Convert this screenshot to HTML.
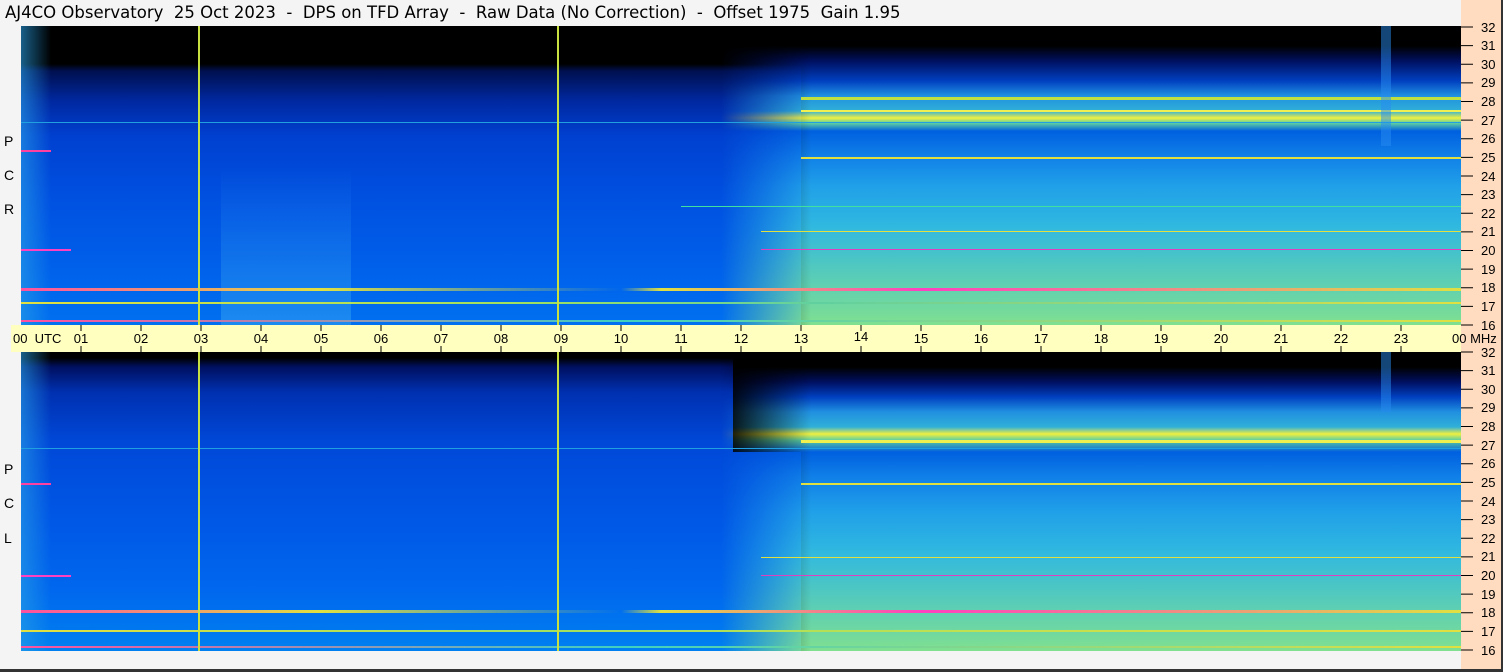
<!DOCTYPE html><html><head><style>
body{margin:0;width:1503px;height:672px;background:#f4f4f4;position:relative;overflow:hidden;font-family:"Liberation Sans","DejaVu Sans",sans-serif}
.a{position:absolute}
.title{left:5px;top:3px;font-size:16.5px;color:#000;white-space:nowrap;font-family:"DejaVu Sans",sans-serif}
.plot{left:21px;width:1440px;height:299px;overflow:hidden;background:#000}
.lft{left:0;top:0;width:780px;height:100%}
.rgt{left:700px;top:0;width:740px;height:100%;-webkit-mask-image:linear-gradient(to right,transparent 0,black 90px);mask-image:linear-gradient(to right,transparent 0,black 90px)}
.ln{position:absolute;height:2px}
.vl{position:absolute;top:0;width:2px;height:100%;background:#c8e040}
.ax{left:11px;top:325px;width:1450px;height:27px;background:#ffffc0}
.rp{left:1461px;top:0;width:40px;height:672px;background:#ffdcc0;border-right:2px solid #333}
.tk{position:absolute;font-size:13px;color:#000}
.let{position:absolute;left:4px;font-size:14px}
</style></head><body>
<div class="a title">AJ4CO Observatory&nbsp; 25 Oct 2023&nbsp; -&nbsp; DPS on TFD Array&nbsp; -&nbsp; Raw Data (No Correction)&nbsp; -&nbsp; Offset 1975&nbsp; Gain 1.95</div>
<div class="a rp"></div>
<div class="a" style="left:0;top:669px;width:1503px;height:3px;background:#333"></div>

<div class="a plot" style="top:26px">
 <div class="a lft" style="background:linear-gradient(#000 0,#000 38px,#001050 45px,#0028a0 75px,#0040d0 110px,#0050e0 170px,#0060ea 240px,#0070f0 299px)"></div>
 <div class="a" style="left:0;top:0;width:30px;height:299px;background:linear-gradient(90deg,rgba(40,160,230,.6),transparent)"></div>
 <div class="a" style="left:200px;top:140px;width:130px;height:159px;background:linear-gradient(rgba(60,160,240,0),rgba(60,170,240,.45));"></div>
 <div class="a rgt" style="background:linear-gradient(#000 0,#000 20px,#001060 35px,#0040c0 55px,#2090e0 70px,#30b0d8 85px,#f0f040 92px,#60d0a0 97px,#0060e0 105px,#1080e8 130px,#20a0e8 160px,#30b8e0 200px,#50c8c0 240px,#70d8a0 280px,#80e090 299px)"></div>
 <div class="ln" style="top:96px;left:0;width:1440px;height:1px;background:#20a0e0"></div>
 <div class="ln" style="top:131px;left:780px;width:660px;background:#e0e040"></div>
 <div class="ln" style="top:124px;left:0;width:30px;background:#ff40a0"></div>
 <div class="ln" style="top:223px;left:0;width:50px;background:#ff40c0"></div>
 <div class="ln" style="top:223px;left:740px;width:700px;background:#e040c0;height:1px"></div>
 <div class="ln" style="top:205px;left:740px;width:700px;background:#e0e040;height:1px"></div>
 <div class="ln" style="top:262px;left:0;width:1440px;height:3px;background:linear-gradient(90deg,#ff50a0 0,#e0e040 300px,rgba(0,120,240,0) 600px,#e0e040 640px,#ff40c0 900px,#e0e040 1440px)"></div>
 <div class="ln" style="top:276px;left:0;width:1440px;background:linear-gradient(90deg,#e0e040,#a0e060 500px,#60d0a0 800px,#e0e040 1440px)"></div>
 <div class="ln" style="top:294px;left:0;width:1440px;background:linear-gradient(90deg,#ff50a0,#40d0c0 600px,#e0e040 1440px)"></div>
 <div class="ln" style="top:180px;left:660px;width:780px;height:1px;background:#40e0a0"></div>
 <div class="ln" style="top:71px;left:780px;width:660px;height:3px;background:#c0e040"></div>
 <div class="ln" style="top:84px;left:780px;width:660px;height:2px;background:#f0f050"></div>
 <div class="vl" style="left:177px"></div><div class="vl" style="left:536px"></div>
 <div class="a" style="left:1360px;top:0;width:10px;height:120px;background:rgba(40,140,240,.5)"></div>
</div>

<div class="a ax"></div>
<div class="a" style="left:0;top:325px;width:1503px;height:27px">
 <span class="tk" style="left:13px;top:6px">00&nbsp; UTC</span>
 <span class="tk" style="left:1452px;top:6px">00 MHz</span>
</div>

<div class="a plot" style="top:352px">
 <div class="a lft" style="background:linear-gradient(#000 0,#000 6px,#001060 15px,#0030b0 40px,#0048d8 90px,#0058e6 170px,#0068ee 240px,#0080f0 299px)"></div>
 <div class="a" style="left:0;top:0;width:30px;height:299px;background:linear-gradient(90deg,rgba(40,160,230,.6),transparent)"></div>
 <div class="a" style="left:712px;top:0;width:70px;height:100px;background:#000"></div>
 <div class="a rgt" style="background:linear-gradient(#000 0,#000 15px,#001060 30px,#0040c0 45px,#2090e0 60px,#30b0d8 75px,#f0f040 82px,#60d0a0 88px,#0060e0 100px,#1080e8 125px,#20a0e8 160px,#30b8e0 200px,#50c8c0 240px,#70d8a0 280px,#80e090 299px)"></div>
 <div class="ln" style="top:96px;left:0;width:1440px;height:1px;background:#20a0e0"></div>
 <div class="ln" style="top:131px;left:780px;width:660px;background:#e0e040"></div>
 <div class="ln" style="top:131px;left:0;width:30px;background:#ff40a0"></div>
 <div class="ln" style="top:223px;left:0;width:50px;background:#ff40c0"></div>
 <div class="ln" style="top:223px;left:740px;width:700px;background:#e040c0;height:1px"></div>
 <div class="ln" style="top:205px;left:740px;width:700px;background:#e0e040;height:1px"></div>
 <div class="ln" style="top:258px;left:0;width:1440px;height:3px;background:linear-gradient(90deg,#ff50a0 0,#e0e040 300px,rgba(0,120,240,0) 600px,#e0e040 640px,#ff40c0 900px,#e0e040 1440px)"></div>
 <div class="ln" style="top:278px;left:0;width:1440px;background:linear-gradient(90deg,#e0e040,#a0e060 500px,#e0e040 1440px)"></div>
 <div class="ln" style="top:294px;left:0;width:1440px;background:linear-gradient(90deg,#ff50a0,#40d0c0 600px,#e0e040 1440px)"></div>
 <div class="ln" style="top:88px;left:780px;width:660px;height:3px;background:#f0f050"></div>
 <div class="vl" style="left:177px"></div><div class="vl" style="left:536px"></div>
 <div class="a" style="left:1360px;top:0;width:10px;height:60px;background:rgba(40,140,240,.5)"></div>
</div>

<div class="let" style="top:133px">P</div><div class="let" style="top:167px">C</div><div class="let" style="top:201px">R</div>
<div class="let" style="top:461px">P</div><div class="let" style="top:495px">C</div><div class="let" style="top:530px">L</div>

<svg class="a" style="left:0;top:0" width="1503" height="672">
<g stroke="#000" stroke-width="1">
<path d="M1461 27h12M1461 45.6h12M1461 64.3h12M1461 82.9h12M1461 101.5h12M1461 120.1h12M1461 138.8h12M1461 157.4h12M1461 176h12M1461 194.6h12M1461 213.3h12M1461 231.9h12M1461 250.5h12M1461 269.1h12M1461 287.8h12M1461 306.4h12M1461 325h12"/>
<path d="M1461 352h12M1461 370.6h12M1461 389.3h12M1461 407.9h12M1461 426.5h12M1461 445.1h12M1461 463.8h12M1461 482.4h12M1461 501h12M1461 519.6h12M1461 538.3h12M1461 556.9h12M1461 575.5h12M1461 594.1h12M1461 612.8h12M1461 631.4h12M1461 650h12"/>
<path d="M81 325v6M141 325v6M201 325v6M261 325v6M321 325v6M381 325v6M441 325v6M501 325v6M561 325v6M621 325v6M681 325v6M741 325v6M801 325v6M861 325v6M921 325v6M981 325v6M1041 325v6M1101 325v6M1161 325v6M1221 325v6M1281 325v6M1341 325v6M1401 325v6"/>
<path d="M81 346v6M141 346v6M201 346v6M261 346v6M321 346v6M381 346v6M441 346v6M501 346v6M561 346v6M621 346v6M681 346v6M741 346v6M801 346v6M861 346v6M921 346v6M981 346v6M1041 346v6M1101 346v6M1161 346v6M1221 346v6M1281 346v6M1341 346v6M1401 346v6"/>
</g>
<g font-family="Liberation Sans, sans-serif" font-size="13" fill="#000">
<text x="1481" y="32">32</text><text x="1481" y="50">31</text><text x="1481" y="69">30</text><text x="1481" y="87">29</text><text x="1481" y="106">28</text><text x="1481" y="125">27</text><text x="1481" y="143">26</text><text x="1481" y="162">25</text><text x="1481" y="181">24</text><text x="1481" y="199">23</text><text x="1481" y="218">22</text><text x="1481" y="236">21</text><text x="1481" y="255">20</text><text x="1481" y="274">19</text><text x="1481" y="292">18</text><text x="1481" y="311">17</text><text x="1481" y="330">16</text>
<text x="1481" y="357">32</text><text x="1481" y="375">31</text><text x="1481" y="394">30</text><text x="1481" y="412">29</text><text x="1481" y="431">28</text><text x="1481" y="450">27</text><text x="1481" y="468">26</text><text x="1481" y="487">25</text><text x="1481" y="506">24</text><text x="1481" y="524">23</text><text x="1481" y="543">22</text><text x="1481" y="561">21</text><text x="1481" y="580">20</text><text x="1481" y="599">19</text><text x="1481" y="617">18</text><text x="1481" y="636">17</text><text x="1481" y="655">16</text>
<g text-anchor="middle"><text x="81" y="343">01</text><text x="141" y="343">02</text><text x="201" y="343">03</text><text x="261" y="343">04</text><text x="321" y="343">05</text><text x="381" y="343">06</text><text x="441" y="343">07</text><text x="501" y="343">08</text><text x="561" y="343">09</text><text x="621" y="343">10</text><text x="681" y="343">11</text><text x="741" y="343">12</text><text x="801" y="343">13</text><text x="861" y="341">14</text><text x="921" y="343">15</text><text x="981" y="343">16</text><text x="1041" y="343">17</text><text x="1101" y="343">18</text><text x="1161" y="343">19</text><text x="1221" y="343">20</text><text x="1281" y="343">21</text><text x="1341" y="343">22</text><text x="1401" y="343">23</text></g>
</g>
</svg>
</body></html>
